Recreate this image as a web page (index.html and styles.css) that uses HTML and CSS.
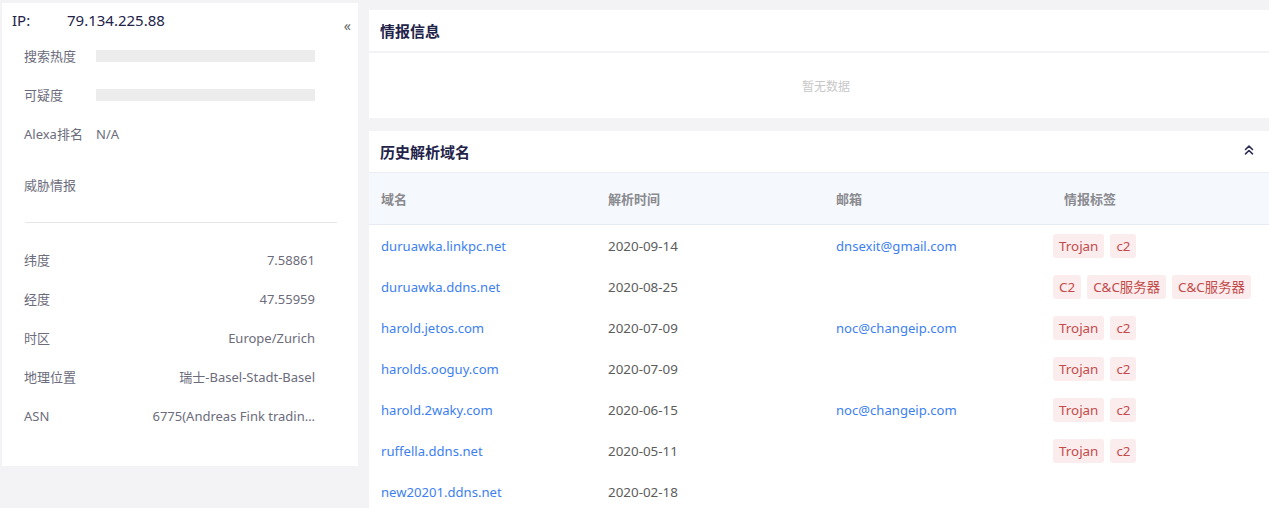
FILE: index.html
```html
<!DOCTYPE html>
<html lang="zh">
<head>
<meta charset="utf-8">
<title>IP 详情</title>
<link rel="stylesheet" href="styles.css">
</head>
<body>
<div class="page">
  <aside class="side">
    <div class="ip-row">
      <span class="ip-label">IP:</span>
      <span class="ip-value">79.134.225.88</span>
      <span class="collapse">«</span>
    </div>
    <div class="row"><span class="lbl">搜索热度</span><span class="bar"></span></div>
    <div class="row"><span class="lbl">可疑度</span><span class="bar"></span></div>
    <div class="row"><span class="lbl">Alexa排名</span><span class="plain">N/A</span></div>
    <div class="row threat"><span class="lbl">威胁情报</span></div>
    <div class="divider"></div>
    <div class="row kv"><span class="lbl">纬度</span><span class="val">7.58861</span></div>
    <div class="row kv"><span class="lbl">经度</span><span class="val">47.55959</span></div>
    <div class="row kv"><span class="lbl">时区</span><span class="val">Europe/Zurich</span></div>
    <div class="row kv"><span class="lbl">地理位置</span><span class="val">瑞士-Basel-Stadt-Basel</span></div>
    <div class="row kv"><span class="lbl">ASN</span><span class="val trunc">6775(Andreas Fink tradin…</span></div>
  </aside>
  <main class="main">
    <section class="card">
      <div class="card-head"><h2>情报信息</h2></div>
      <div class="empty">暂无数据</div>
    </section>
    <section class="card">
      <div class="card-head head2">
        <h2>历史解析域名</h2>
        <svg class="up" width="10" height="10" viewBox="0 0 10 10" fill="none" stroke="#2b2d55" stroke-width="1.6" stroke-linecap="round" stroke-linejoin="round"><path d="M1.5 4.5 L5 1.2 L8.5 4.5"/><path d="M1.5 8.8 L5 5.5 L8.5 8.8"/></svg>
      </div>
      <div class="table">
        <div class="tr th">
          <div class="c">域名</div><div class="c">解析时间</div><div class="c">邮箱</div><div class="c tagh">情报标签</div>
        </div>
        <div class="tr">
          <div class="c link">duruawka.linkpc.net</div><div class="c date">2020-09-14</div><div class="c link">dnsexit@gmail.com</div>
          <div class="c tags"><span class="tag">Trojan</span><span class="tag">c2</span></div>
        </div>
        <div class="tr">
          <div class="c link">duruawka.ddns.net</div><div class="c date">2020-08-25</div><div class="c"></div>
          <div class="c tags"><span class="tag">C2</span><span class="tag">C&amp;C服务器</span><span class="tag">C&amp;C服务器</span></div>
        </div>
        <div class="tr">
          <div class="c link">harold.jetos.com</div><div class="c date">2020-07-09</div><div class="c link">noc@changeip.com</div>
          <div class="c tags"><span class="tag">Trojan</span><span class="tag">c2</span></div>
        </div>
        <div class="tr">
          <div class="c link">harolds.ooguy.com</div><div class="c date">2020-07-09</div><div class="c"></div>
          <div class="c tags"><span class="tag">Trojan</span><span class="tag">c2</span></div>
        </div>
        <div class="tr">
          <div class="c link">harold.2waky.com</div><div class="c date">2020-06-15</div><div class="c link">noc@changeip.com</div>
          <div class="c tags"><span class="tag">Trojan</span><span class="tag">c2</span></div>
        </div>
        <div class="tr">
          <div class="c link">ruffella.ddns.net</div><div class="c date">2020-05-11</div><div class="c"></div>
          <div class="c tags"><span class="tag">Trojan</span><span class="tag">c2</span></div>
        </div>
        <div class="tr">
          <div class="c link">new20201.ddns.net</div><div class="c date">2020-02-18</div><div class="c"></div>
          <div class="c tags"></div>
        </div>
      </div>
    </section>
  </main>
</div>
</body>
</html>
```
FILE: styles.css
```css
html, body {
  margin: 0;
  padding: 0;
  background: #f3f3f5;
  overflow: hidden;
  height: 508px;
}
body {
  font-family: "Noto Sans", "Noto Sans CJK SC", sans-serif;
  font-size: 13px;
  color: #666;
}
.page {
  display: flex;
  align-items: flex-start;
}
.side {
  width: 356px;
  flex: none;
  margin: 3px 0 0 2px;
  background: #fff;
  padding-bottom: 31px;
  box-sizing: border-box;
}
.ip-row {
  height: 33px;
  display: flex;
  align-items: center;
  padding-left: 10px;
  color: #23234a;
  font-size: 15px;
}
.ip-label { width: 55px; }
.collapse {
  margin-left: auto;
  margin-right: 7px;
  margin-top: 12px;
  color: #666;
  font-size: 14px;
}
.row {
  height: 39px;
  display: flex;
  align-items: center;
  padding: 0 43px 0 22px;
  color: #6c6c7c;
}
.row .lbl { width: 72px; flex: none; }
.bar {
  flex: 1;
  height: 12px;
  background: #ececec;
}
.threat { margin-top: 12px; }
.divider {
  height: 1px;
  background: #e6e6e8;
  margin: 18px 21px 17px 23px;
}
.kv .val {
  margin-left: auto;
  text-align: right;
  white-space: nowrap;
}
.main {
  margin: 10px 0 0 11px;
  flex: 1;
  display: flex;
  flex-direction: column;
  gap: 13px;
}
.card { background: #fff; }
.card-head {
  height: 41px;
  display: flex;
  align-items: center;
  padding: 0 15px 0 11px;
  border-bottom: 2px solid #f3f3f5;
}
.card-head h2 {
  margin: 0;
  font-size: 15px;
  font-weight: 700;
  color: #23234a;
  white-space: nowrap;
}
.head2 {
  border-bottom: 1px solid #eaedf2;
  justify-content: space-between;
}
.up { margin-top: -4px; }
.empty {
  height: 65px;
  display: flex;
  align-items: center;
  justify-content: center;
  padding-left: 14px;
  color: #c8c8c8;
  font-size: 12px;
}
.table { display: flex; flex-direction: column; }
.tr {
  display: grid;
  grid-template-columns: 227px 228px 229px 1fr;
  height: 41px;
  align-items: center;
}
.th {
  height: 51px;
  background: #f5f9fd;
  border-bottom: 1px solid #e6ebf2;
  font-weight: 600;
  color: #8a8a8f;
}
.c { padding-left: 12px; white-space: nowrap; }
.tagh { padding-left: 11px; }
.link { color: #3d7ff0; font-size: 13.1px; }
.date { color: #5c5c5c; font-size: 13.4px; }
.tags { display: flex; gap: 6px; padding-left: 0; }
.tag {
  height: 24px;
  line-height: 24px;
  padding: 0 6px;
  border-radius: 3px;
  background: #fbeded;
  color: #c44b4b;
  font-size: 13.4px;
}
```
